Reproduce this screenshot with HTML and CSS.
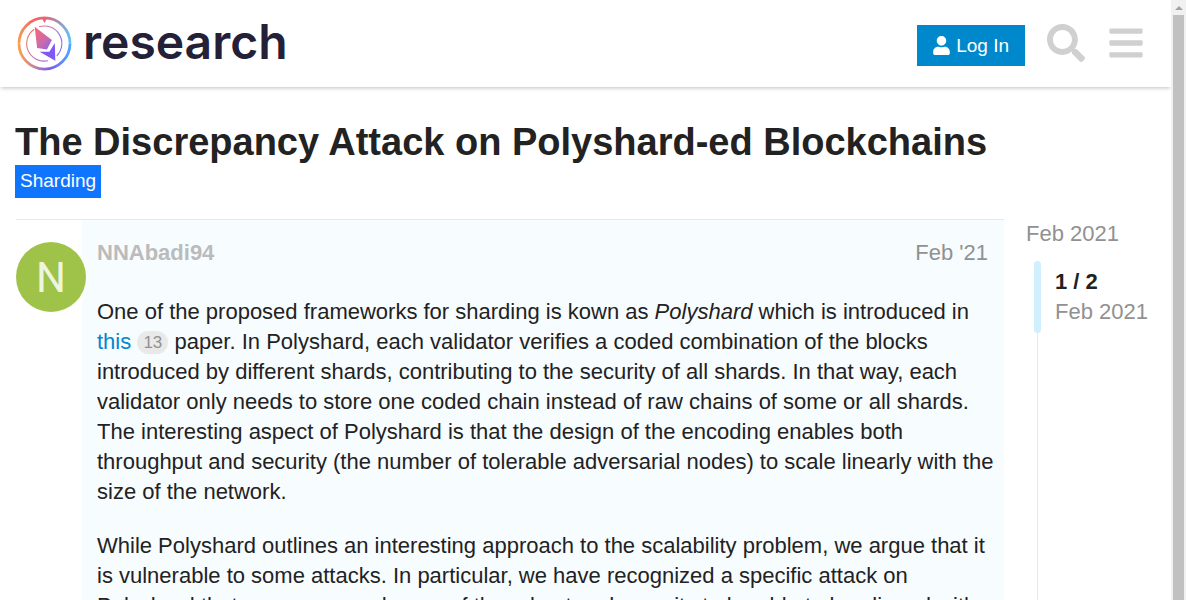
FILE: index.html
```
<!DOCTYPE html>
<html lang="en">
<head>
<meta charset="utf-8">
<meta name="viewport" content="width=device-width, initial-scale=1">
<title>The Discrepancy Attack on Polyshard-ed Blockchains</title>
<link rel="stylesheet" href="styles.css">
</head>
<body>
<div class="site">
  <header class="site-header">
    <a class="logo" href="#" aria-label="research home">
      <svg class="logo-mark" viewBox="0 0 56 56" aria-hidden="true">
        <defs>
          <linearGradient id="warm" x1="0" y1="0" x2="1" y2="1">
            <stop offset="0.1" stop-color="#f2697a"/>
            <stop offset="0.6" stop-color="#c76bb0"/>
            <stop offset="1" stop-color="#8a60e8"/>
          </linearGradient>
          <linearGradient id="side" x1="0" y1="0" x2="1" y2="1">
            <stop offset="0" stop-color="#f07080"/>
            <stop offset="0.5" stop-color="#a080d8"/>
            <stop offset="1" stop-color="#7a60ff"/>
          </linearGradient>
          <linearGradient id="inner" x1="0" y1="0" x2="1" y2="1">
            <stop offset="0" stop-color="#f8805c"/>
            <stop offset="1" stop-color="#a064d8"/>
          </linearGradient>
          <linearGradient id="top" x1="0" y1="0" x2="1" y2="0">
            <stop offset="0" stop-color="#f79a50"/>
            <stop offset="0.25" stop-color="#f4695f"/>
            <stop offset="0.55" stop-color="#e5657a"/>
            <stop offset="1" stop-color="#62c0f5"/>
          </linearGradient>
          <linearGradient id="bottom" x1="0" y1="0" x2="1" y2="0">
            <stop offset="0" stop-color="#f8a050"/>
            <stop offset="0.25" stop-color="#d08890"/>
            <stop offset="0.6" stop-color="#8058f0"/>
            <stop offset="1" stop-color="#4fa6ff"/>
          </linearGradient>
        </defs>
        <path d="M2 28a26 26 0 0 1 52 0" fill="none" stroke="url(#top)" stroke-width="2.800"/>
        <path d="M2 28a26 26 0 0 0 52 0" fill="none" stroke="url(#bottom)" stroke-width="2.800"/>
        <path d="M25.500 2.500h5L28 7z" fill="#e5657a"/>
        <path d="M17.500 13.500A17.800 17.800 0 0 0 31.500 45.500" fill="none" stroke="url(#inner)" stroke-width="1.100"/>
        <path d="M22.500 11A17.800 17.800 0 0 1 40.500 40.500" fill="none" stroke="url(#side)" stroke-width="1.100"/>
        <path d="M18 11L35.500 24.500L30.500 34L20.500 32.500z" fill="url(#warm)"/>
        <path d="M38.500 27.500L39 45.500L23 36.500L33 36.500z" fill="#8058f5"/>
      </svg>
      <span class="logo-text">research</span>
    </a>
    <nav class="header-actions" aria-label="Site">
      <button class="login" type="button">
        <svg class="login-icon" viewBox="0 0 448 512" aria-hidden="true"><path fill="currentColor" d="M224 256c70.700 0 128-57.300 128-128S294.700 0 224 0 96 57.300 96 128s57.300 128 128 128zm89.600 32h-16.700c-22.200 10.200-46.900 16-72.900 16s-50.600-5.800-72.900-16h-16.700C60.200 288 0 348.200 0 422.400V464c0 26.500 21.500 48 48 48h352c26.500 0 48-21.500 48-48v-41.600c0-74.200-60.200-134.400-134.400-134.400z"/></svg>
        <span>Log In</span>
      </button>
      <button class="icon-button" type="button" aria-label="Search">
        <svg class="header-icon" viewBox="0 0 512 512" aria-hidden="true"><path fill="currentColor" d="M505 442.700L405.300 343c-4.500-4.500-10.600-7-17-7H372c27.600-35.300 44-79.700 44-128C416 93.100 322.900 0 208 0S0 93.100 0 208s93.100 208 208 208c48.300 0 92.700-16.400 128-44v16.300c0 6.400 2.500 12.500 7 17l99.700 99.700c9.400 9.400 24.600 9.400 33.900 0l28.300-28.300c9.400-9.400 9.400-24.600.1-34zM208 336c-70.700 0-128-57.200-128-128 0-70.700 57.200-128 128-128 70.700 0 128 57.200 128 128 0 70.700-57.200 128-128 128z"/></svg>
      </button>
      <button class="icon-button" type="button" aria-label="Menu">
        <svg class="header-icon" viewBox="0 0 448 512" aria-hidden="true"><path fill="currentColor" d="M16 132h416c8.800 0 16-7.200 16-16V76c0-8.800-7.200-16-16-16H16C7.200 60 0 67.200 0 76v40c0 8.800 7.200 16 16 16zm0 160h416c8.800 0 16-7.200 16-16v-40c0-8.800-7.200-16-16-16H16c-8.800 0-16 7.200-16 16v40c0 8.800 7.200 16 16 16zm0 160h416c8.800 0 16-7.200 16-16v-40c0-8.800-7.200-16-16-16H16c-8.800 0-16 7.200-16 16v40c0 8.800 7.200 16 16 16z"/></svg>
      </button>
    </nav>
  </header>
  <main class="topic">
    <h1 class="topic-title">The Discrepancy Attack on Polyshard-ed Blockchains</h1>
    <a class="category" href="#">Sharding</a>
    <div class="topic-columns">
      <article class="post">
        <div class="avatar" aria-hidden="true">N</div>
        <div class="post-body">
          <div class="post-meta">
            <a class="author" href="#">NNAbadi94</a>
            <a class="post-date" href="#">Feb '21</a>
          </div>
          <p>One of the proposed frameworks for sharding is kown as <em>Polyshard</em> which is introduced in <a class="link" href="#">this</a> <span class="clicks">13</span> paper. In Polyshard, each validator verifies a coded combination of the blocks introduced by different shards, contributing to the security of all shards. In that way, each validator only needs to store one coded chain instead of raw chains of some or all shards. The interesting aspect of Polyshard is that the design of the encoding enables both throughput and security (the number of tolerable adversarial nodes) to scale linearly with the size of the network.</p>
          <p>While Polyshard outlines an interesting approach to the scalability problem, we argue that it is vulnerable to some attacks. In particular, we have recognized a specific attack on Polyshard that can cause and more of the robust and security to be able to be aligned with the number of nodes.</p>
        </div>
      </article>
      <aside class="timeline">
        <a class="timeline-start" href="#">Feb 2021</a>
        <div class="timeline-track">
          <div class="timeline-handle"></div>
          <div class="timeline-label"><strong>1 / 2</strong><span>Feb 2021</span></div>
        </div>
      </aside>
    </div>
  </main>
</div>
<div class="scrollbar" aria-hidden="true"><span class="scroll-arrow"></span><span class="scroll-thumb"></span></div>
</body>
</html>
```
FILE: styles.css
```
* { box-sizing: border-box; }
body {
  margin: 0;
  height: 100vh;
  overflow: hidden;
  display: flex;
  font-family: "Liberation Sans", Arial, sans-serif;
  font-size: 22px;
  line-height: 30px;
  color: #222;
  background: #fff;
}
a { text-decoration: none; color: inherit; }
button { font: inherit; border: 0; cursor: pointer; }
svg { display: block; }
.site { flex: 1; min-width: 0; overflow: hidden; }
.site-header {
  display: flex;
  align-items: center;
  justify-content: space-between;
  height: 87px;
  padding: 0 26px 0 17px;
  box-shadow: 0 2px 4px -1px rgba(0, 0, 0, 0.25);
}
.logo { display: flex; align-items: center; gap: 11px; }
.logo-mark { width: 55px; height: 55px; }
.logo-text {
  padding-bottom: 4px;
  font: 600 48px/56px Inter, sans-serif;
  color: #242038;
}
.header-actions { display: flex; align-items: center; gap: 22px; }
.login {
  display: flex;
  align-items: center;
  gap: 6px;
  height: 41px;
  margin-top: 4px;
  padding: 0 16px;
  font-size: 19px;
  background: #0088cc;
  color: #fff;
}
.login-icon { width: 17px; height: 19px; }
.icon-button { padding: 0 0 2px; background: none; color: #d0d0d0; }
.header-icon { width: 38px; height: 38px; }
.topic { padding: 32px 24px 0 15px; }
.topic-title { margin: 0; font-size: 38px; line-height: 46px; }
.category {
  display: inline-block;
  padding: 0 5px 1px;
  font-size: 19px;
  line-height: 32px;
  background: #0f75ff;
  color: #fff;
  vertical-align: top;
}
.topic-columns { display: flex; gap: 22px; padding-top: 21px; }
.post {
  flex: 1;
  min-width: 0;
  display: flex;
  margin-left: 1px;
  border-top: 1px solid #e5e9eb;
}
.avatar {
  flex: none;
  width: 70px;
  height: 70px;
  margin: 22px -4px 0 0;
  border-radius: 50%;
  background: #9fc348;
  color: #eef5df;
  font: 42px/72px Roboto, sans-serif;
  text-align: center;
  z-index: 1;
}
.post-body { flex: 1; min-width: 0; padding: 18px 8px 0 15px; background: #f7fcff; }
.post-meta {
  display: flex;
  justify-content: space-between;
  margin-bottom: 29px;
  padding-right: 8px;
}
.author { font-weight: bold; color: #bbb; }
.post-date { color: #919191; }
.post-body p { margin: 0 0 24px; }
.link { color: #0088cc; }
.clicks {
  display: inline-block;
  padding: 0 6px;
  border-radius: 12px;
  font-size: 17px;
  line-height: 23px;
  vertical-align: 1px;
  background: #e9e9e9;
  color: #919191;
}
.timeline { flex: none; width: 121px; color: #919191; white-space: nowrap; }
.timeline-start { display: block; }
.timeline-track {
  display: flex;
  gap: 14px;
  height: 600px;
  margin: 12px 0 0 8px;
  background: linear-gradient(#d1f0ff, #d1f0ff) 3px 0 / 1px 100% no-repeat;
}
.timeline-handle { flex: none; width: 7px; height: 72px; border-radius: 4px; background: #d1f0ff; }
.timeline-label { display: flex; flex-direction: column; padding-top: 6px; }
.timeline-label strong { color: #222; }
.scrollbar {
  flex: none;
  width: 15px;
  display: flex;
  flex-direction: column;
  align-items: center;
  padding-top: 6px;
  gap: 5px;
  background: #f1f1f1;
}
.scroll-arrow {
  border: 4px solid transparent;
  border-top: 0;
  border-bottom-color: #a3a3a3;
}
.scroll-thumb { flex: 1; width: 11px; background: #c1c1c1; }
```
